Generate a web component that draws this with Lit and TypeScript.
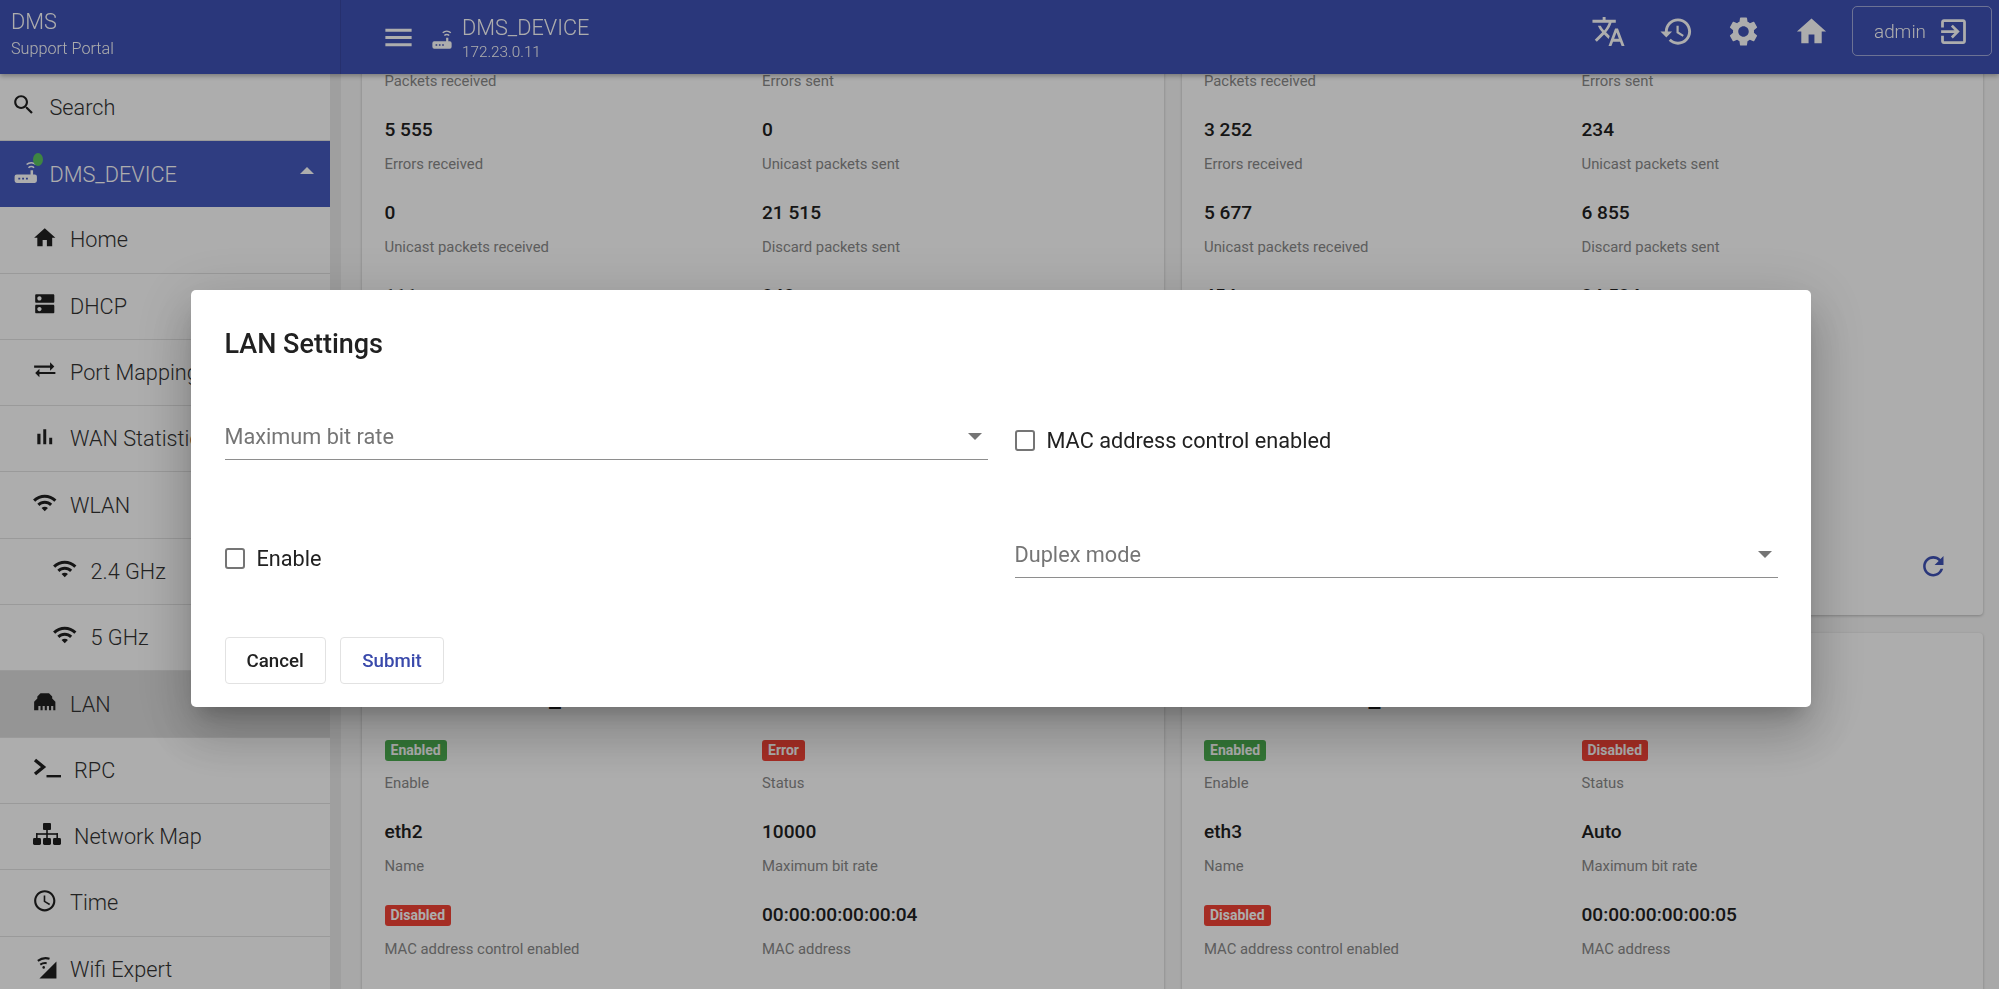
import { LitElement, html, css, nothing } from "lit";
import { customElement } from "lit/decorators.js";

const P: Record<string, string> = {
  search: "M15.5 14h-.79l-.28-.27C15.41 12.59 16 11.11 16 9.5 16 5.91 13.09 3 9.5 3S3 5.91 3 9.5 5.91 16 9.5 16c1.61 0 3.09-.59 4.23-1.57l.27.28v.79l5 4.99L20.49 19l-4.99-5zm-6 0C7.01 14 5 11.99 5 9.5S7.01 5 9.5 5 14 7.01 14 9.5 11.99 14 9.5 14z",
  home: "M10 20v-6h4v6h5v-8h3L12 3 2 12h3v8z",
  dns: "M20 13H4c-.55 0-1 .45-1 1v6c0 .55.45 1 1 1h16c.55 0 1-.45 1-1v-6c0-.55-.45-1-1-1zM7 19c-1.1 0-2-.9-2-2s.9-2 2-2 2 .9 2 2-.9 2-2 2zM20 3H4c-.55 0-1 .45-1 1v6c0 .55.45 1 1 1h16c.55 0 1-.45 1-1V4c0-.55-.45-1-1-1zM7 9c-1.1 0-2-.9-2-2s.9-2 2-2 2 .9 2 2-.9 2-2 2z",
  swap: "M17.01 5v3H2v2h15.01v3L21 9l-3.99-4zM6.99 11L3 15l3.99 4v-3H22v-2H6.99v-3z",
  bars: "M5 9.2h3V19H5zM10.6 5h2.8v14h-2.8zm5.6 8H19v6h-2.8z",
  wifi: "M1 9l2 2c4.97-4.97 13.03-4.97 18 0l2-2C16.93 2.93 7.08 2.93 1 9zm8 8l3 3 3-3c-1.65-1.66-4.34-1.66-6 0zm-4-4l2 2c2.76-2.76 7.24-2.76 10 0l2-2C15.14 9.14 8.87 9.14 5 13z",
  lan: "M2 20v-8l3-3V7l3-3h8l3 3v2l3 3v8h-2v-4h-2v4h-2v-4h-2v4h-2v-4h-2v4H8v-4H6v4z",
  time: "M11.99 2C6.47 2 2 6.48 2 12s4.47 10 9.99 10C17.52 22 22 17.52 22 12S17.52 2 11.99 2zM12 20c-4.42 0-8-3.58-8-8s3.58-8 8-8 8 3.58 8 8-3.58 8-8 8zm.5-13H11v6l5.25 3.15.75-1.23-4.5-2.67z",
  translate: "M12.87 15.07l-2.54-2.51.03-.03c1.74-1.94 2.98-4.17 3.71-6.53H17V4h-7V2H8v2H1v1.99h11.17C11.5 7.92 10.44 9.75 9 11.35 8.07 10.32 7.3 9.19 6.69 8h-2c.73 1.63 1.73 3.17 2.98 4.56l-5.09 5.02L4 19l5-5 3.11 3.11.76-2.04zM18.5 10h-2L12 22h2l1.12-3h4.75L21 22h2l-4.5-12zm-2.62 7l1.62-4.33L19.12 17h-3.24z",
  history: "M13 3c-4.97 0-9 4.03-9 9H1l3.89 3.89.07.14L9 12H6c0-3.87 3.13-7 7-7s7 3.13 7 7-3.13 7-7 7c-1.93 0-3.68-.79-4.94-2.06l-1.42 1.42C8.27 19.99 10.51 21 13 21c4.97 0 9-4.03 9-9s-4.03-9-9-9zm-1 5v5l4.28 2.54.72-1.21-3.5-2.08V8H12z",
  gear: "M19.14 12.94c.04-.3.06-.61.06-.94 0-.32-.02-.64-.07-.94l2.03-1.58c.18-.14.23-.41.12-.61l-1.92-3.32c-.12-.22-.37-.29-.59-.22l-2.39.96c-.5-.38-1.03-.7-1.62-.94l-.36-2.54c-.04-.24-.24-.41-.48-.41h-3.84c-.24 0-.43.17-.47.41l-.36 2.54c-.59.24-1.13.57-1.62.94l-2.39-.96c-.22-.08-.47 0-.59.22L2.74 8.87c-.12.21-.08.47.12.61l2.03 1.58c-.05.3-.09.63-.09.94s.02.64.07.94l-2.03 1.58c-.18.14-.23.41-.12.61l1.92 3.32c.12.22.37.29.59.22l2.39-.96c.5.38 1.03.7 1.62.94l.36 2.54c.05.24.24.41.48.41h3.84c.24 0 .44-.17.47-.41l.36-2.54c.59-.24 1.13-.56 1.62-.94l2.39.96c.22.08.47 0 .59-.22l1.92-3.32c.12-.22.07-.47-.12-.61l-2.01-1.58zM12 15.6c-1.98 0-3.6-1.62-3.6-3.6s1.62-3.6 3.6-3.6 3.6 1.62 3.6 3.6-1.62 3.6-3.6 3.6z",
  refresh: "M17.65 6.35C16.2 4.9 14.21 4 12 4c-4.42 0-7.99 3.58-7.99 8s3.57 8 7.99 8c3.73 0 6.84-2.55 7.73-6h-2.08c-.82 2.33-3.04 4-5.65 4-3.31 0-6-2.69-6-6s2.69-6 6-6c1.66 0 3.14.69 4.22 1.78L13 11h7V4l-2.35 2.35z",
  logout: "M10.09 15.59L11.5 17l5-5-5-5-1.41 1.41L12.67 11H3v2h9.67l-2.58 2.59zM19 3H5c-1.11 0-2 .9-2 2v4h2V5h14v14H5v-4H3v4c0 1.1.89 2 2 2h14c1.1 0 2-.9 2-2V5c0-1.1-.9-2-2-2z",
  menu: "M3 18h18v-2H3v2zm0-5h18v-2H3v2zm0-7v2h18V6H3z",
  router: "M3.5 14.5h13V10.5h2.4v4h1.6a2 2 0 0 1 2 2v4a2 2 0 0 1-2 2h-17a2 2 0 0 1-2-2v-4a2 2 0 0 1 2-2zM5 17.6v1.8h1.8v-1.8zM8.6 17.6v1.8h1.8v-1.8zM12.2 17.6v1.8h1.8v-1.8z",
};

const ico = (n: string, cls = "") => html`<svg class="ico ${cls}" viewBox="0 0 24 24"><path fill-rule="evenodd" d=${P[n]}></path></svg>`;

const routerIco = (cls: string) => html`<svg class="ico ${cls}" viewBox="0 0 24 24">
  <path fill-rule="evenodd" d=${P.router}></path>
  <path d="M14.6 8.2a3.6 3.6 0 0 1 5.2 0M12.8 5.2a6.6 6.6 0 0 1 8.8 0" fill="none" stroke="currentColor" stroke-width="1.5"></path>
</svg>`;

const terminal = html`<svg class="fa" viewBox="0 0 28 22"><path d="M2 3l8.5 7L2 17" fill="none" stroke="currentColor" stroke-width="3.4"></path><path d="M13.5 18h14.5v2.4H13.5z"></path></svg>`;
const sitemap = html`<svg class="fa" viewBox="0 0 28 22">
  <rect x="10" y="0" width="8" height="7" rx="1"></rect><rect x="13.2" y="7" width="1.6" height="4"></rect>
  <rect x="3" y="10.2" width="22" height="1.6"></rect>
  <rect x="3" y="10.2" width="1.6" height="5"></rect><rect x="13.2" y="10.2" width="1.6" height="5"></rect><rect x="23.4" y="10.2" width="1.6" height="5"></rect>
  <rect x="0" y="15" width="8" height="7" rx="1.4"></rect><rect x="10" y="15" width="8" height="7" rx="1.4"></rect><rect x="20" y="15" width="8" height="7" rx="1.4"></rect>
</svg>`;
const wifiExpert = html`<svg class="ico" viewBox="0 0 24 24">
  <path d="M23 23H7L23 7z"></path>
  <path d="M5.5 6.5a12 12 0 0 1 11-2M7.8 10a8 8 0 0 1 6-1.4" fill="none" stroke="currentColor" stroke-width="1.9"></path>
  <circle cx="11" cy="12.6" r="1.2"></circle>
</svg>`;

type F = { v: string; l: string; b?: string };
const c1: F[] = [
  { v: "", l: "Packets received" }, { v: "", l: "Errors sent" },
  { v: "5 555", l: "Errors received" }, { v: "0", l: "Unicast packets sent" },
  { v: "0", l: "Unicast packets received" }, { v: "21 515", l: "Discard packets sent" },
  { v: "111", l: "" }, { v: "848", l: "" },
];
const c2: F[] = [
  { v: "", l: "Packets received" }, { v: "", l: "Errors sent" },
  { v: "3 252", l: "Errors received" }, { v: "234", l: "Unicast packets sent" },
  { v: "5 677", l: "Unicast packets received" }, { v: "6 855", l: "Discard packets sent" },
  { v: "454", l: "" }, { v: "34 534", l: "" },
];
const c3: F[] = [
  { v: "Enabled", b: "g", l: "Enable" }, { v: "Error", b: "r", l: "Status" },
  { v: "eth2", l: "Name" }, { v: "10000", l: "Maximum bit rate" },
  { v: "Disabled", b: "r", l: "MAC address control enabled" }, { v: "00:00:00:00:00:04", l: "MAC address" },
];
const c4: F[] = [
  { v: "Enabled", b: "g", l: "Enable" }, { v: "Disabled", b: "r", l: "Status" },
  { v: "eth3", l: "Name" }, { v: "Auto", l: "Maximum bit rate" },
  { v: "Disabled", b: "r", l: "MAC address control enabled" }, { v: "00:00:00:00:00:05", l: "MAC address" },
];

@customElement("app-root")
export class AppRoot extends LitElement {
  static styles = css`
    :host { display: block; width: 100%; height: 100vh; overflow: hidden; position: relative; font-family: Roboto, "Liberation Sans", sans-serif; background: #fff; }
    * { box-sizing: border-box; }
    .soft { position: absolute; inset: 0; filter: blur(.45px); overflow: hidden; }
    .ico { width: 25.5px; height: 25.5px; fill: currentColor; flex: none; display: block; }
    .fa { width: 28px; height: 22px; fill: currentColor; flex: none; display: block; margin-left: 1.5px; }
    .app { display: grid; grid-template-rows: 74px 1fr; height: 100%; }

    header { display: flex; background: #3f51b5; color: #fff; position: relative; z-index: 2; box-shadow: 0 2px 5px rgba(0,0,0,.3); }
    .brand { width: 341px; border-right: 1px solid rgba(0,0,0,.1); padding: 9px 0 0 11px; font-weight: 300; }
    .brand .t1 { font-size: 21.7px; line-height: 26px; }
    .brand .t2 { font-size: 16.2px; line-height: 20px; margin-top: 4px; }
    .bar { flex: 1; display: flex; align-items: center; padding: 0 7px 0 39.5px; }
    .burger { width: 35px; height: 35px; margin-right: 15.5px; }
    .bar .router { width: 22px; height: 22px; margin-right: 9px; margin-top: 4px; }
    .dev { flex: 1; font-weight: 300; padding-top: 2px; }
    .dev .n { font-size: 21.7px; line-height: 26px; }
    .dev .ip { font-size: 15.3px; line-height: 18px; margin-top: 2px; }
    .acts { display: flex; align-items: center; gap: 32.6px; margin: -12px 23px 0 0; }
    .acts .ico { width: 35px; height: 35px; }
    .admin { width: 140px; height: 50px; border: 1px solid rgba(255,255,255,.5); border-radius: 5px; display: flex; align-items: center; padding-left: 21px; font-size: 18.9px; font-weight: 300; gap: 11px; margin-top: -12px; }
    .admin .ico { width: 33px; height: 33px; }

    .body { display: flex; min-height: 0; }
    nav { width: 330px; flex: none; overflow: hidden; background: #fff; padding-top: .7px; }
    .it { height: 66.3px; display: flex; align-items: center; gap: 13px; padding-left: 31.5px; border-bottom: 1px solid #e3e3e3; font-size: 21.7px; font-weight: 300; color: #333; white-space: nowrap; overflow: hidden; }
    .it > svg { color: #202020; margin-bottom: 5px; }
    .it.l0 { padding-left: 11px; }
    .it.l2 { padding-left: 52px; }
    .it.sel { background: #dcdcdc; }
    .it.open { background: #465abf; color: #fff; border-bottom: 0; position: relative; gap: 11px; }
    .it.open > svg { color: #fff; margin-left: 2px; }
    .it.open .ar { margin: 0 16px 7px auto; width: 0; height: 0; border-left: 7px solid transparent; border-right: 7px solid transparent; border-bottom: 7px solid #fff; }
    .dot { position: absolute; left: 33px; top: 12px; width: 10px; height: 13px; border-radius: 50%; background: #5cc461; }
    .strip { width: 11px; flex: none; background: #eaeaea; }

    main { flex: 1; min-width: 0; overflow: hidden; background: #f8f8f8; padding: 0 16px 0 21px; }
    .grid { display: grid; grid-template-columns: 1fr 1fr; gap: 18px; margin-top: -144px; }
    .card { background: #fff; border-radius: 4px; box-shadow: 0 1px 3px rgba(0,0,0,.25); padding: 0 24px 0 22.5px; }
    .card.low { padding-bottom: 80px; }
    .head { height: 102px; padding-top: 49.5px; font-size: 26.6px; font-weight: 500; line-height: 30px; color: #212121; white-space: nowrap; overflow: hidden; }
    .low .head { height: 101px; }
    .fields { display: grid; grid-template-columns: 1fr 1fr; grid-auto-rows: 82.875px; }
    .val { height: 30px; display: flex; align-items: center; font-size: 19.1px; font-weight: 500; color: #212121; }
    .lab { margin-top: 9px; font-size: 14.85px; line-height: 20px; color: #8a8a8a; }
    .badge { height: 21px; padding: 0 6px; border-radius: 3px; font-size: 14px; font-weight: 700; line-height: 21px; color: #fff; transform: translateY(1px); }
    .badge.g { background: #4caf50; }
    .badge.r { background: #f44336; }
    .foot { height: 251.5px; display: flex; justify-content: flex-end; align-items: flex-end; padding: 0 10px 33px 0; color: #3f51b5; }
    .foot .ico { width: 30.6px; height: 30.6px; }

    .veil { position: absolute; inset: 0; z-index: 5; background: rgba(0,0,0,.32); display: flex; justify-content: center; align-items: flex-start; padding: 290px 0 0 3px; }
    .dlg { width: 1620px; height: 417px; background: #fff; border-radius: 5px; padding: 38px 0 0 33.5px; box-shadow: 0 14px 19px -9px rgba(0,0,0,.2), 0 30px 48px 4px rgba(0,0,0,.14), 0 11px 58px 10px rgba(0,0,0,.12); }
    .dlg h2 { margin: 0 0 54px; font-size: 27px; line-height: 32px; font-weight: 500; color: #212121; }
    .form { display: grid; grid-template-columns: 763px 763px; column-gap: 27px; grid-template-rows: 118px 105px; align-items: start; }
    .sel-f { height: 46px; display: flex; align-items: center; justify-content: space-between; padding: 0 6px 0 0; border-bottom: 1.4px solid #8e8e8e; font-size: 21.7px; color: #757575; }
    .sel-f i { width: 0; height: 0; border-left: 7px solid transparent; border-right: 7px solid transparent; border-top: 7px solid #757575; }
    .chk { height: 52px; display: flex; align-items: center; gap: 12px; font-size: 21.7px; color: #212121; }
    .chk b { width: 20px; height: 21px; border: 2px solid #757575; border-radius: 3px; flex: none; }
    .btns { display: flex; gap: 14.5px; }
    button { height: 47px; padding: 0 21px; background: #fff; border: 1px solid #e2e2e2; border-radius: 4px; font: 500 18.7px Roboto, "Liberation Sans", sans-serif; color: #212121; }
    button.p { color: #3949ab; }
  `;

  private nav(label: string, icon: unknown, cls = "") {
    return html`<div class="it ${cls}">${icon}<span>${label}</span></div>`;
  }

  private card(title: string, fields: F[], foot: boolean) {
    return html`<section class="card ${foot ? "" : "low"}">
      <div class="head">${title}</div>
      <div class="fields">
        ${fields.map((f) => html`<div>
          <div class="val">${f.b ? html`<span class="badge ${f.b}">${f.v}</span>` : f.v}</div>
          ${f.l ? html`<div class="lab">${f.l}</div>` : nothing}
        </div>`)}
      </div>
      ${foot ? html`<div class="foot">${ico("refresh")}</div>` : nothing}
    </section>`;
  }

  render() {
    return html`
      <div class="soft">
      <div class="app">
        <header>
          <div class="brand"><div class="t1">DMS</div><div class="t2">Support Portal</div></div>
          <div class="bar">
            ${ico("menu", "burger")}
            ${routerIco("router")}
            <div class="dev"><div class="n">DMS_DEVICE</div><div class="ip">172.23.0.11</div></div>
            <div class="acts">${ico("translate")}${ico("history")}${ico("gear")}${ico("home")}</div>
            <div class="admin"><span>admin</span>${ico("logout")}</div>
          </div>
        </header>
        <div class="body">
          <nav>
            ${this.nav("Search", ico("search"), "l0")}
            <div class="it l0 open">${routerIco("")}<span class="dot"></span><span>DMS_DEVICE</span><span class="ar"></span></div>
            ${this.nav("Home", ico("home"))}
            ${this.nav("DHCP", ico("dns"))}
            ${this.nav("Port Mapping", ico("swap"))}
            ${this.nav("WAN Statistics", ico("bars"))}
            ${this.nav("WLAN", ico("wifi"))}
            ${this.nav("2.4 GHz", ico("wifi"), "l2")}
            ${this.nav("5 GHz", ico("wifi"), "l2")}
            ${this.nav("LAN", ico("lan"), "sel")}
            ${this.nav("RPC", terminal)}
            ${this.nav("Network Map", sitemap)}
            ${this.nav("Time", ico("time"))}
            ${this.nav("Wifi Expert", wifiExpert)}
          </nav>
          <div class="strip"></div>
          <main>
            <div class="grid">
              ${this.card("", c1, true)}
              ${this.card("", c2, true)}
              ${this.card("LAN Interface_2", c3, false)}
              ${this.card("LAN Interface_3", c4, false)}
            </div>
          </main>
        </div>
      </div>
      <div class="veil">
        <div class="dlg">
          <h2>LAN Settings</h2>
          <div class="form">
            <div class="sel-f"><span>Maximum bit rate</span><i></i></div>
            <label class="chk"><b></b>MAC address control enabled</label>
            <label class="chk"><b></b>Enable</label>
            <div class="sel-f"><span>Duplex mode</span><i></i></div>
          </div>
          <div class="btns"><button>Cancel</button><button class="p">Submit</button></div>
        </div>
      </div>
      </div>
    `;
  }
}
